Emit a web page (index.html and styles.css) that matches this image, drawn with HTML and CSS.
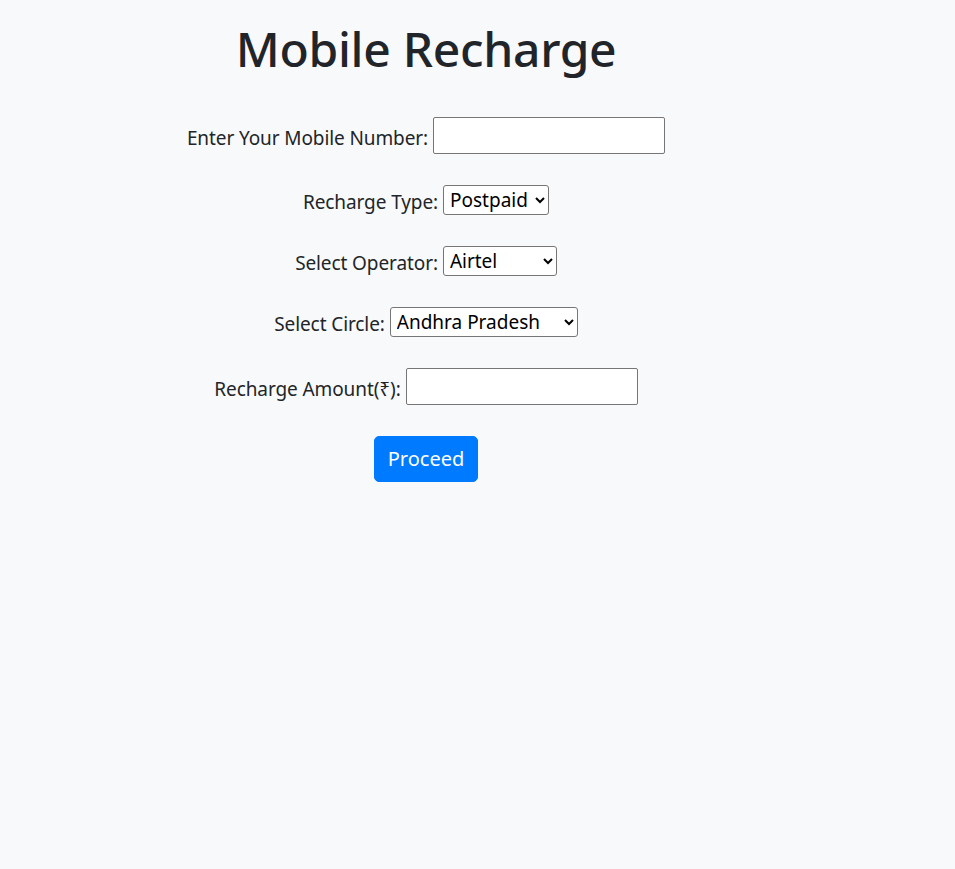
FILE: index.html
```html
<!DOCTYPE html>
<html lang="en">
<head>
<meta charset="utf-8">
<title>Mobile Recharge</title>
<link rel="stylesheet" href="styles.css">
</head>
<body>
<main class="page">
  <h1 class="title">Mobile Recharge</h1>
  <form class="form">
    <div class="row">
      <label class="label" for="mobile">Enter Your Mobile Number:</label>
      <input class="text-input" id="mobile" type="text">
    </div>
    <div class="row">
      <label class="label" for="type">Recharge Type:</label>
      <select class="select select-type" id="type">
        <option>Postpaid</option>
        <option>Prepaid</option>
      </select>
    </div>
    <div class="row">
      <label class="label" for="operator">Select Operator:</label>
      <select class="select select-operator" id="operator">
        <option>Airtel</option>
        <option>Jio</option>
        <option>Vodafone</option>
        <option>BSNL</option>
      </select>
    </div>
    <div class="row">
      <label class="label" for="circle">Select Circle:</label>
      <select class="select select-circle" id="circle">
        <option>Andhra Pradesh</option>
        <option>Karnataka</option>
        <option>Tamil Nadu</option>
      </select>
    </div>
    <div class="row">
      <label class="label" for="amount">Recharge Amount(₹):</label>
      <input class="text-input" id="amount" type="text">
    </div>
    <div class="row">
      <button class="btn" type="button">Proceed</button>
    </div>
  </form>
</main>
</body>
</html>
```

FILE: styles.css
```css
html, body {
  margin: 0;
  padding: 0;
}
body {
  background: #f8f9fa;
  color: #212529;
  font-family: "Noto Sans", "Open Sans", sans-serif;
  font-size: 19px;
  line-height: 1.5;
  min-height: 869px;
}
.page {
  width: 852px;
  padding-top: 19px;
  text-align: center;
}
.title {
  margin: 0 0 38px;
  font-size: 48px;
  font-weight: 500;
  line-height: 60px;
  letter-spacing: -0.3px;
}
.form {
  display: flex;
  flex-direction: column;
  align-items: center;
  gap: 31px;
}
.row {
  display: flex;
  align-items: center;
  justify-content: center;
  gap: 5px;
}
.label {
  font-size: 19px;
  line-height: 26px;
  padding-top: 4px;
  letter-spacing: -0.1px;
}
.text-input {
  box-sizing: border-box;
  width: 232px;
  height: 37px;
  border: 1px solid #767676;
  border-radius: 2px;
  background: #fff;
  font: inherit;
  padding: 1px 4px;
}
.select {
  box-sizing: border-box;
  height: 30px;
  font-family: inherit;
  font-size: 19px;
  color: #000;
  background: #fff;
  border: 1px solid #767676;
  border-radius: 3px;
  padding: 0 0 0 2px;
}
.select-type { width: 106px; }
.select-operator { width: 114px; }
.select-circle { width: 188px; }
.btn {
  box-sizing: border-box;
  width: 104px;
  height: 46px;
  border: 1px solid #007bff;
  border-radius: 5px;
  background: #007bff;
  color: #fff;
  font-family: inherit;
  font-size: 20px;
  line-height: 30px;
  padding: 0;
}
```
